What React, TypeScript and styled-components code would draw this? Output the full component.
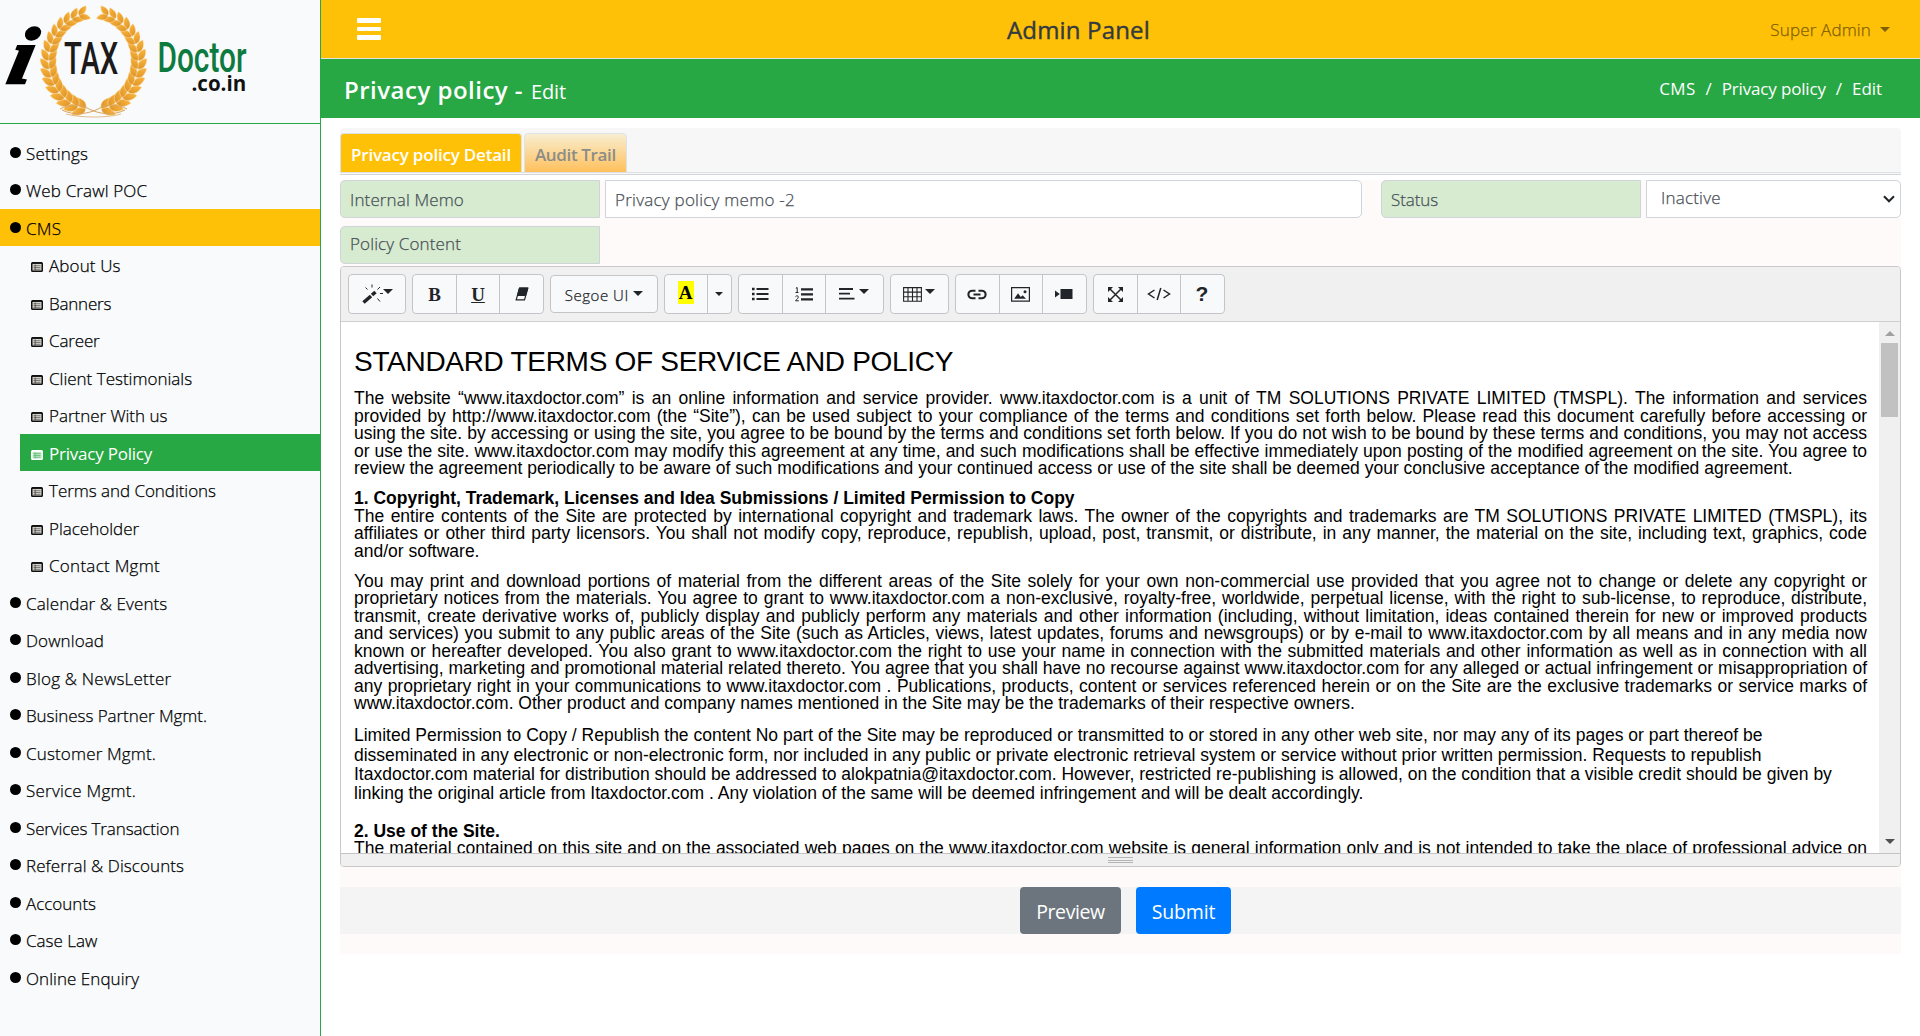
import React from 'react';
import styled, { createGlobalStyle, css } from 'styled-components';

const GREEN = '#28a745';
const AMBER = '#ffc107';
const UI = "'Segoe UI', 'Open Sans', 'Noto Sans', sans-serif";
const DOC = "'Liberation Sans', Arial, sans-serif";

const Global = createGlobalStyle`
  *, *::before, *::after { box-sizing: border-box; }
  body { margin: 0; background: #fff; font-family: ${UI}; font-size: 16px; color: #212529; overflow: hidden; }
`;

const Shell = styled.div`
  display: flex;
  height: 1036px;
  width: 1920px;
`;

const Sidebar = styled.aside`
  width: 321px;
  flex: none;
  background: #f8fafc;
  border-right: 1px solid ${GREEN};
`;

const Brand = styled.div`
  height: 124px;
  border-bottom: 1px solid ${GREEN};
  svg { display: block; }
`;

const Menu = styled.nav`
  padding-top: 10px;
`;

const light = css`
  font-weight: 300;
  -webkit-text-stroke: 0.25px currentColor;
`;

const Item = styled.a<{ $sub?: boolean; $tone?: 'amber' | 'green' }>`
  display: flex;
  align-items: center;
  height: 37px;
  margin: 0 0 0.5px ${p => (p.$sub ? 20 : 0)}px;
  padding-top: 1px;
  padding-left: ${p => (p.$sub ? 11 : 10)}px;
  gap: ${p => (p.$sub ? 6 : 5)}px;
  color: ${p => (p.$tone === 'green' ? '#fff' : '#000')};
  background: ${p => (p.$tone === 'green' ? GREEN : p.$tone === 'amber' ? AMBER : 'transparent')};
  font-size: 17px;
  ${p => p.$tone !== 'green' && light}
  svg { flex: none; }
`;

const Dot = styled.i`
  width: 11px;
  height: 11px;
  border-radius: 50%;
  background: #000;
  margin-top: -2px;
`;

const Label = styled.span<{ $ls?: number }>`
  display: inline-block;
  white-space: nowrap;
  letter-spacing: ${p => p.$ls ?? 0}px;
`;

const Main = styled.div`
  flex: 1;
  min-width: 0;
`;

const TopBar = styled.header`
  height: 59px;
  background: ${AMBER};
  border-bottom: 1px solid #dee2e6;
  display: grid;
  grid-template-columns: 650px auto 1fr;
  align-items: center;
  padding: 0 30px 0 36px;
`;

const Burger = styled.div`
  display: grid;
  gap: 4px;
  width: 24px;
  i { height: 4.5px; background: #fff; border-radius: 1px; }
`;

const AppTitle = styled.h1`
  margin: 1px 0 0;
  font-size: 24px;
  font-weight: 500;
  color: #343a40;
  line-height: 30px;
  -webkit-text-stroke: 0.4px currentColor;
`;

const User = styled.div`
  justify-self: end;
  display: flex;
  align-items: center;
  gap: 9px;
  font-size: 17px;
  color: #7f6003;
  ${light}
`;

const Caret = styled.i<{ $s?: number; $up?: number }>`
  border: ${p => p.$s ?? 5}px solid transparent;
  border-top-color: currentColor;
  border-bottom: 0;
  margin-bottom: ${p => p.$up ?? 0}px;
`;

const PageBar = styled.div`
  height: 59px;
  background: ${GREEN};
  color: #fff;
  display: flex;
  align-items: center;
  justify-content: space-between;
  padding: 0 38px 0 23px;
`;

const PageTitle = styled.h2`
  margin: 4px 0 0;
  display: flex;
  align-items: baseline;
  gap: 8px;
  font-size: 24px;
  font-weight: 600;
  line-height: 30px;
  small { font-size: 20px; font-weight: 400; }
`;

const Crumbs = styled.div`
  display: flex;
  gap: 10px;
  font-size: 17px;
`;

const Body = styled.div`
  padding: 10px 19px 0 19px;
`;

const TabBar = styled.div`
  display: flex;
  align-items: flex-end;
  gap: 2px;
  height: 47px;
  padding: 0 0 1px;
  background: linear-gradient(#f7f7f7 44px, #dee2e6 44px, #dee2e6 45px, #f7f7f7 45px);
  border-bottom: 1px solid #d3d5d8;
  border-radius: 4px 4px 0 0;
`;

const Tab = styled.div<{ $on?: boolean }>`
  height: ${p => (p.$on ? 39 : 40)}px;
  margin-bottom: ${p => (p.$on ? 1 : 0)}px;
  padding: 2px 10px 0;
  display: flex;
  align-items: center;
  border: 1px solid #dee2e6;
  border-bottom-width: ${p => (p.$on ? 0 : 1)}px;
  border-radius: 4px 4px 0 0;
  font-size: 17px;
  font-weight: 600;
  color: ${p => (p.$on ? '#fff' : '#8c8c88')};
  background: ${p => (p.$on ? AMBER : 'linear-gradient(#f8eed0, #ffc05c)')};
`;

const Form = styled.div`
  margin-top: 5px;
  height: 774px;
  background: snow;
`;

const Row = styled.div`
  display: flex;
  margin-bottom: 8px;
`;

const box = css`
  height: 38px;
  display: flex;
  align-items: center;
  border: 1px solid #ced4da;
  font-size: 17px;
  color: #495057;
  ${light}
`;

const FieldLabel = styled.label<{ $lift?: boolean }>`
  ${box}
  width: 260px;
  padding: 0 0 ${p => (p.$lift ? 3 : 0)}px 9px;
  background: #d6ebd0;
  border-radius: 5px 0 0 5px;
`;

const Field = styled.div<{ $w: number; $gap?: number; $select?: boolean }>`
  ${box}
  width: ${p => p.$w}px;
  margin: 0 ${p => p.$gap ?? 0}px 0 5px;
  padding: 0 5px 0 ${p => (p.$select ? 14 : 9)}px;
  justify-content: space-between;
  background: #fff;
  border-radius: 0 5px 5px 0;
  & > span { margin-bottom: ${p => (p.$select ? 4 : 0)}px; }
`;

const Editor = styled.section`
  margin-top: -6px;
  height: 601px;
  border: 1px solid #c8c8c8;
  border-radius: 4px;
  overflow: hidden;
  display: flex;
  flex-direction: column;
`;

const Tools = styled.div`
  height: 55px;
  flex: none;
  background: #f0f0f0;
  border-bottom: 1px solid #cfcfcf;
  padding: 7px 7px 0;
  display: flex;
  gap: 6px;
`;

const Group = styled.div<{ $short?: boolean }>`
  display: flex;
  height: ${p => (p.$short ? 38 : 40)}px;
  margin-top: ${p => (p.$short ? 1 : 0)}px;
  border: 1px solid #c3c5c8;
  border-radius: 4px;
  background: #f8f9fb;
  overflow: hidden;
`;

const Tool = styled.button<{ $w: number; $gap?: number }>`
  width: ${p => p.$w}px;
  padding: 0;
  border: 0;
  background: transparent;
  color: #212529;
  display: flex;
  align-items: center;
  justify-content: center;
  gap: ${p => p.$gap ?? 4}px;
  font-family: ${UI};
  font-size: 15px;
  & + & { border-left: 1px solid #c3c5c8; }
  & > ${Label} { ${light} margin-top: 2px; }
`;

const Serif = styled.span<{ $u?: boolean; $mark?: boolean }>`
  font: bold 19px/21px 'Liberation Serif', serif;
  text-decoration: ${p => (p.$u ? 'underline' : 'none')};
  ${p => p.$mark && css`background: #ff0; color: #000; padding: 1px 1px; width: 16px; margin-top: -3px;`}
`;

const Pane = styled.div`
  flex: 1;
  min-height: 0;
  display: flex;
  background: #fff;
`;

const Doc = styled.article`
  flex: 1;
  overflow: hidden;
  padding: 22px 12px 0 13px;
  font-family: ${DOC};
  font-size: 17.5px;
  line-height: 17.5px;
  color: #000;
`;

const DocTitle = styled.h3`
  margin: 0 0 10px;
  font-size: 28px;
  line-height: 36px;
  font-weight: 400;
`;

const Para = styled.p<{ $mb?: number; $loose?: boolean }>`
  margin: 0 0 ${p => p.$mb ?? 12.6}px;
  text-align: ${p => (p.$loose ? 'left' : 'justify')};
  ${p => p.$loose && css`line-height: 19.4px;`}
`;

const Scroll = styled.div`
  width: 21px;
  background: #f0f0f0;
  display: flex;
  flex-direction: column;
  align-items: center;
  padding: 9px 0 9px;
`;

const Thumb = styled.div`
  width: 17px;
  height: 74px;
  margin: 7px 0 auto;
  background: #c1c1c1;
`;

const Arrow = styled.i<{ $up?: boolean }>`
  border: 5px solid transparent;
  ${p => (p.$up ? 'border-bottom-color: #a0a0a0; border-top: 0;' : 'border-top-color: #505050; border-bottom: 0;')}
`;

const Grip = styled.div`
  height: 13px;
  flex: none;
  background: #f0f0f0;
  border-top: 1px solid #c4c4c4;
  display: flex;
  flex-direction: column;
  align-items: center;
  gap: 1.5px;
  padding-top: 3px;
  i { width: 25px; height: 1px; background: #b5b5b5; }
`;

const Actions = styled.div`
  margin-top: 20px;
  height: 47px;
  background: #f4f4f4;
  display: flex;
  justify-content: center;
  gap: 15px;
  padding-left: 10px;
`;

const Button = styled.button<{ $bg: string; $w: number }>`
  width: ${p => p.$w}px;
  border: 0;
  padding: 2px 0 0;
  border-radius: 4px;
  background: ${p => p.$bg};
  color: #fff;
  font: 400 19.5px ${UI};
`;

const ListMark = styled.svg`
  margin-top: 3px;
`;

const ListIcon = ({ on }: { on?: boolean }) => {
  const c = on ? '#fff' : '#111';
  return (
    <ListMark width="12" height="10" viewBox="0 0 12 10">
      <rect x="0.75" y="0.75" width="10.5" height="8.5" rx="0.8" fill={on ? '#bfe5c8' : '#d8d4cd'} stroke={c} strokeWidth="1.5" />
      <path d="M1 1.2h10" stroke={c} strokeWidth="1.4" />
      <path d="M2.5 3.7h7M2.5 5.5h7M2.5 7.3h7" stroke={on ? '#5cbd72' : '#666'} strokeWidth="0.8" />
      <path d="M4.2 2.5v6" stroke={on ? '#5cbd72' : '#444'} strokeWidth="0.8" />
    </ListMark>
  );
};

const LEAF = 'M0 0C1 -5 6 -7.500 14 -4.500C12 1 5 3.500 0 0Z';

const Branch = () => {
  const leaves: React.ReactNode[] = [];
  const n = 16;
  for (let i = 0; i < n; i++) {
    const t = (100 + (i * 151) / (n - 1)) * (Math.PI / 180);
    const x = 93.5 + 44.5 * Math.cos(t);
    const y = 61 + 48 * Math.sin(t);
    const dir = (Math.atan2(48 * Math.cos(t), -44.5 * Math.sin(t)) * 180) / Math.PI;
    const k = 1.06 - i * 0.016;
    leaves.push(
      <g key={i} transform={`translate(${x.toFixed(1)} ${y.toFixed(1)}) rotate(${dir.toFixed(1)}) scale(${k.toFixed(2)})`}>
        <path d={LEAF} transform="rotate(-17)" />
        <path d={LEAF} transform="rotate(17) scale(1 -1)" />
      </g>,
    );
  }
  return <g fill="url(#gold)" stroke="#fbe3b8" strokeWidth="0.5">{leaves}</g>;
};

const Logo = () => (
  <svg width="320" height="123" viewBox="0 0 320 123">
    <defs>
      <linearGradient id="gold" gradientUnits="objectBoundingBox" x1="0" y1="0" x2="1" y2="0.3">
        <stop offset="0" stopColor="#d98f28" />
        <stop offset="1" stopColor="#fab43a" />
      </linearGradient>
    </defs>
    <Branch />
    <g transform="translate(187 0) scale(-1 1)"><Branch /></g>
    <g fill="none" stroke="#d9a45c" strokeWidth="1">
      <path d="M62 110C74 116 88 114 98 109C106 104 118 104 127 109" />
      <path d="M125 110C113 116 99 114 89 109C81 104 69 104 60 109" />
      <path d="M66 114C80 118 108 118 121 114" strokeWidth="0.7" />
    </g>
    <text transform="translate(5 83) skewX(-12) scale(1.1 1)" fontFamily="Liberation Serif, serif" fontStyle="italic" fontWeight="700" fontSize="80" stroke="#000" strokeWidth="2.5">i</text>
    <text transform="translate(64 74) scale(0.65 1)" fontFamily="Roboto, sans-serif" fontWeight="500" fontSize="45" fill="#1c1a1b">TAX</text>
    <text transform="translate(157.5 72) scale(0.71 1)" fontFamily="Roboto, sans-serif" fontWeight="500" fontSize="42" fill="#0d7a3f">Doctor</text>
    <text transform="translate(191.5 91)" fontFamily="Open Sans, sans-serif" fontWeight="700" fontSize="20.5" fill="#111">.co.in</text>
  </svg>
);

const Ico = ({ w = 20, h = 16, children }: { w?: number; h?: number; children: React.ReactNode }) => (
  <svg width={w} height={h} viewBox={`0 0 ${w} ${h}`} fill="none" stroke="#212529">{children}</svg>
);

const Wand = () => (
  <Ico w={21} h={20}>
    <path d="M1.5 18.5L9 12" strokeWidth="3.6" />
    <path d="M10 11L13.5 8" strokeWidth="3.6" />
    <path d="M10 0.5v3M3.5 3.5l2 2M18 3l-2.5 2.5M18 9.5h3M15.5 14.5l2.5 3" strokeWidth="1" />
  </Ico>
);
const Eraser = () => (
  <Ico w={14} h={14}>
    <path d="M4.5 1h8.3L9.5 12.8H1.2Z" strokeWidth="1.2" />
    <path d="M4.5 1h8.3L10.7 8.5H2.4Z" fill="#212529" />
  </Ico>
);
const Bullets = () => (
  <Ico w={17} h={14}>
    <path d="M4.5 2h12M4.5 7h12M4.5 12h12" strokeWidth="2.2" />
    <path d="M0 2h2.6M0 7h2.6M0 12h2.6" strokeWidth="2.4" />
  </Ico>
);
const Numbers = () => (
  <Ico w={18} h={15}>
    <path d="M6 2.3h12M6 7.3h12M6 12.3h12" strokeWidth="2.2" />
    <path d="M0.8 1.2L2.2 .6V5.5M0.5 5.5h3M.5 9.6C1.2 8.4 3.6 8.6 3.3 10.3C3.1 11.5 1.5 12.2 .6 13.8H3.8" strokeWidth="1" />
  </Ico>
);
const AlignLeft = () => (
  <Ico w={16} h={14}>
    <path d="M0 2h14M0 6.7h11M0 11.6h15.5" strokeWidth="1.8" />
  </Ico>
);
const Table = () => (
  <Ico w={19} h={15}>
    <path d="M.6 .6h17.8v13.6H.6ZM.6 5.100h17.8M.6 9.700h17.8M5 .6v13.6M9.5 .6v13.6M14 .6v13.6" strokeWidth="1.100" />
  </Ico>
);
const LinkIcon = () => (
  <Ico w={20} h={11}>
    <path d="M8.5 9.3H5.2a3.8 3.8 0 0 1 0-7.6H8.5M11.5 1.7h3.3a3.8 3.8 0 0 1 0 7.6H11.5M6.5 5.5h7" strokeWidth="2.1" />
  </Ico>
);
const Picture = () => (
  <Ico w={19} h={15}>
    <path d="M.6 .6h17.8v13.6H.6Z" strokeWidth="1.2" />
    <path d="M3.2 11.8L7 6.2L9.8 10L11.6 8.2L15 11.8Z" fill="#212529" stroke="none" />
    <circle cx="14" cy="4.7" r="1.5" fill="#212529" stroke="none" />
  </Ico>
);
const Video = () => (
  <Ico w={18} h={12}>
    <path d="M5.5 1h12v10h-12ZM0 2.6L4.8 6L0 9.4Z" fill="#212529" stroke="none" />
  </Ico>
);
const Expand = () => (
  <Ico w={15} h={15}>
    <path d="M2 2l11 11M13 2L2 13" strokeWidth="1.5" />
    <path d="M0 0h5L0 5ZM15 0v5L10 0ZM0 15v-5l5 5ZM15 15h-5l5-5Z" fill="#212529" stroke="none" />
  </Ico>
);
const Code = () => (
  <Ico w={24} h={14}>
    <path d="M7.5 3L1.5 7l6 4M16.5 3l6 4l-6 4M13.8 1L10.2 13" strokeWidth="1.5" />
  </Ico>
);
const Help = styled.span`
  font: bold 21px 'Liberation Sans', sans-serif;
`;

type Entry = { t: string; ls: number; sub?: boolean; tone?: 'amber' | 'green' };
const MENU: Entry[] = [
  { t: 'Settings', ls: 0.17 },
  { t: 'Web Crawl POC', ls: 0.15 },
  { t: 'CMS', ls: 0.25, tone: 'amber' },
  { t: 'About Us', ls: 0.13, sub: true },
  { t: 'Banners', ls: -0.2, sub: true },
  { t: 'Career', ls: -0.15, sub: true },
  { t: 'Client Testimonials', ls: 0, sub: true },
  { t: 'Partner With us', ls: -0.03, sub: true },
  { t: 'Privacy Policy', ls: -0.23, sub: true, tone: 'green' },
  { t: 'Terms and Conditions', ls: -0.04, sub: true },
  { t: 'Placeholder', ls: 0, sub: true },
  { t: 'Contact Mgmt', ls: 0.28, sub: true },
  { t: 'Calendar & Events', ls: 0.1 },
  { t: 'Download', ls: 0.1 },
  { t: 'Blog & NewsLetter', ls: 0.23 },
  { t: 'Business Partner Mgmt.', ls: -0.05 },
  { t: 'Customer Mgmt.', ls: 0.16 },
  { t: 'Service Mgmt.', ls: 0.23 },
  { t: 'Services Transaction', ls: -0.12 },
  { t: 'Referral & Discounts', ls: 0.08 },
  { t: 'Accounts', ls: 0 },
  { t: 'Case Law', ls: 0 },
  { t: 'Online Enquiry', ls: 0.05 },
];

export default function App() {
  return (
    <>
      <Global />
      <Shell>
        <Sidebar>
          <Brand><Logo /></Brand>
          <Menu>
            {MENU.map(m => (
              <Item key={m.t} $sub={m.sub} $tone={m.tone}>
                {m.sub ? <ListIcon on={m.tone === 'green'} /> : <Dot />}
                <Label $ls={m.ls}>{m.t}</Label>
              </Item>
            ))}
          </Menu>
        </Sidebar>
        <Main>
          <TopBar>
            <Burger><i /><i /><i /></Burger>
            <AppTitle><Label $ls={0.17}>Admin Panel</Label></AppTitle>
            <User><Label $ls={0.15}>Super Admin</Label><Caret /></User>
          </TopBar>
          <PageBar>
            <PageTitle><Label $ls={0.49}>Privacy policy -</Label><small><Label $ls={-0.2}>Edit</Label></small></PageTitle>
            <Crumbs>
              <Label $ls={0.3}>CMS</Label><span>/</span><Label $ls={-0.17}>Privacy policy</Label><span>/</span><Label $ls={-0.05}>Edit</Label>
            </Crumbs>
          </PageBar>
          <Body>
            <TabBar>
              <Tab $on><Label $ls={-0.2}>Privacy policy Detail</Label></Tab>
              <Tab><Label $ls={-0.35}>Audit Trail</Label></Tab>
            </TabBar>
            <Form>
              <Row>
                <FieldLabel><Label $ls={0.13}>Internal Memo</Label></FieldLabel>
                <Field $w={757} $gap={19}><Label $ls={0.25}>Privacy policy memo -2</Label></Field>
                <FieldLabel><Label $ls={-0.1}>Status</Label></FieldLabel>
                <Field $w={255} $select>
                  <Label $ls={0.2}>Inactive</Label>
                  <Ico w={12} h={8}><path d="M1 1.2L6 6.300L11 1.2" strokeWidth="2" /></Ico>
                </Field>
              </Row>
              <Row><FieldLabel $lift><Label $ls={0.13}>Policy Content</Label></FieldLabel></Row>
              <Editor>
                <Tools>
                  <Group><Tool $w={56} $gap={0}><Wand /><Caret $up={5} /></Tool></Group>
                  <Group>
                    <Tool $w={43}><Serif>B</Serif></Tool>
                    <Tool $w={43}><Serif $u>U</Serif></Tool>
                    <Tool $w={44}><Eraser /></Tool>
                  </Group>
                  <Group $short><Tool $w={105.5}><Label $ls={0.54}>Segoe UI</Label><Caret $up={1} /></Tool></Group>
                  <Group>
                    <Tool $w={42}><Serif $mark>A</Serif></Tool>
                    <Tool $w={24}><Caret $s={4} /></Tool>
                  </Group>
                  <Group>
                    <Tool $w={43}><Bullets /></Tool>
                    <Tool $w={43}><Numbers /></Tool>
                    <Tool $w={58}><AlignLeft /><Caret $up={5} /></Tool>
                  </Group>
                  <Group><Tool $w={57} $gap={3}><Table /><Caret $up={5} /></Tool></Group>
                  <Group>
                    <Tool $w={43}><LinkIcon /></Tool>
                    <Tool $w={43}><Picture /></Tool>
                    <Tool $w={44}><Video /></Tool>
                  </Group>
                  <Group>
                    <Tool $w={43}><Expand /></Tool>
                    <Tool $w={43}><Code /></Tool>
                    <Tool $w={44}><Help>?</Help></Tool>
                  </Group>
                </Tools>
                <Pane>
                  <Doc>
                    <DocTitle><Label $ls={-0.3}>STANDARD TERMS OF SERVICE AND POLICY</Label></DocTitle>
                    <Para>The website “www.itaxdoctor.com” is an online information and service provider. www.itaxdoctor.com is a unit of TM SOLUTIONS PRIVATE LIMITED (TMSPL). The information and services provided by http://www.itaxdoctor.com (the “Site”), can be used subject to your compliance of the terms and conditions set forth below. Please read this document carefully before accessing or using the site. by accessing or using the site, you agree to be bound by the terms and conditions set forth below. If you do not wish to be bound by these terms and conditions, you may not access or use the site. www.itaxdoctor.com may modify this agreement at any time, and such modifications shall be effective immediately upon posting of the modified agreement on the site. You agree to review the agreement periodically to be aware of such modifications and your continued access or use of the site shall be deemed your conclusive acceptance of the modified agreement.</Para>
                    <Para><b>1. Copyright, Trademark, Licenses and Idea Submissions / Limited Permission to Copy</b><br />The entire contents of the Site are protected by international copyright and trademark laws. The owner of the copyrights and trademarks are TM SOLUTIONS PRIVATE LIMITED (TMSPL), its affiliates or other third party licensors. You shall not modify copy, reproduce, republish, upload, post, transmit, or distribute, in any manner, the material on the site, including text, graphics, code and/or software.</Para>
                    <Para $mb={13.5}>You may print and download portions of material from the different areas of the Site solely for your own non-commercial use provided that you agree not to change or delete any copyright or proprietary notices from the materials. You agree to grant to www.itaxdoctor.com a non-exclusive, royalty-free, worldwide, perpetual license, with the right to sub-license, to reproduce, distribute, transmit, create derivative works of, publicly display and publicly perform any materials and other information (including, without limitation, ideas contained therein for new or improved products and services) you submit to any public areas of the Site (such as Articles, views, latest updates, forums and newsgroups) or by e-mail to www.itaxdoctor.com by all means and in any media now known or hereafter developed. You also grant to www.itaxdoctor.com the right to use your name in connection with the submitted materials and other information as well as in connection with all advertising, marketing and promotional material related thereto. You agree that you shall have no recourse against www.itaxdoctor.com for any alleged or actual infringement or misappropriation of any proprietary right in your communications to www.itaxdoctor.com . Publications, products, content or services referenced herein or on the Site are the exclusive trademarks or service marks of www.itaxdoctor.com. Other product and company names mentioned in the Site may be the trademarks of their respective owners.</Para>
                    <Para $loose $mb={19}>Limited Permission to Copy / Republish the content No part of the Site may be reproduced or transmitted to or stored in any other web site, nor may any of its pages or part thereof be<br />disseminated in any electronic or non-electronic form, nor included in any public or private electronic retrieval system or service without prior written permission. Requests to republish<br />Itaxdoctor.com material for distribution should be addressed to alokpatnia@itaxdoctor.com. However, restricted re-publishing is allowed, on the condition that a visible credit should be given by<br />linking the original article from Itaxdoctor.com . Any violation of the same will be deemed infringement and will be dealt accordingly.</Para>
                    <Para><b>2. Use of the Site.</b><br />The material contained on this site and on the associated web pages on the www.itaxdoctor.com website is general information only and is not intended to take the place of professional advice on any matter.</Para>
                  </Doc>
                  <Scroll><Arrow $up /><Thumb /><Arrow /></Scroll>
                </Pane>
                <Grip><i /><i /><i /></Grip>
              </Editor>
              <Actions>
                <Button $bg="#6c757d" $w={101}><Label $ls={-0.4}>Preview</Label></Button>
                <Button $bg="#007bff" $w={95}><Label $ls={-0.2}>Submit</Label></Button>
              </Actions>
            </Form>
          </Body>
        </Main>
      </Shell>
    </>
  );
}
